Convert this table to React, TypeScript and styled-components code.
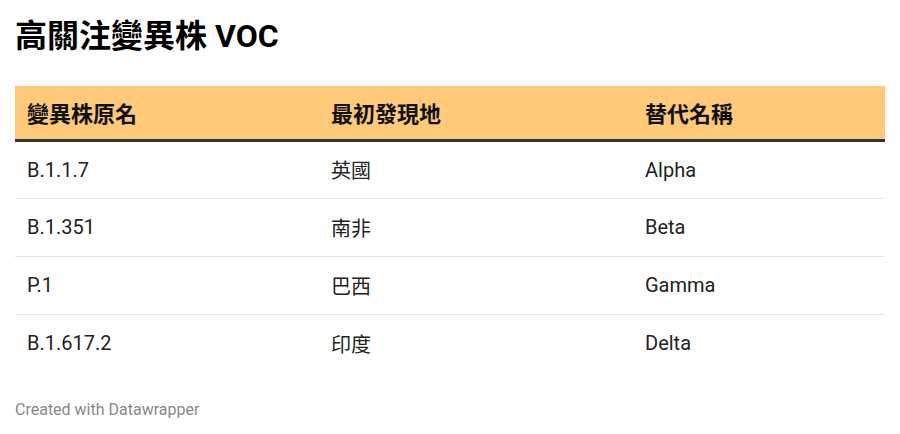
import React from 'react';
import styled, { createGlobalStyle } from 'styled-components';

const GlobalStyle = createGlobalStyle`
  html, body {
    margin: 0;
    padding: 0;
    background: #ffffff;
  }
  *, *::before, *::after {
    box-sizing: border-box;
  }
  body {
    font-family: Roboto, "Noto Sans CJK TC", sans-serif;
    color: #1d1d1d;
  }
`;

const StyledPage = styled.div`
  padding: 14px 15px 0 15px;
  width: 900px;
`;

const StyledTitle = styled.h1`
  margin: 0;
  font-size: 32px;
  line-height: 44px;
  font-weight: 700;
  color: #000;
`;

const StyledTable = styled.table`
  margin-top: 28px;
  width: 870px;
  border-collapse: collapse;
  table-layout: fixed;
`;

const StyledHeadCell = styled.th<{ $width: number }>`
  width: ${({ $width }) => $width}px;
  background: #fec978;
  text-align: left;
  font-size: 22px;
  font-weight: 700;
  color: #111;
  padding: 0 12px;
  height: 54px;
  border-bottom: 3px solid #333333;
`;

const StyledRow = styled.tr<{ $last?: boolean }>`
  border-bottom: ${({ $last }) => ($last ? 'none' : '1px solid #e6e6e6')};
`;

const StyledCell = styled.td`
  padding: 0 12px;
  height: 58px;
  font-size: 20px;
  color: #222;
`;

const StyledFooter = styled.p`
  margin: 28px 0 0;
  font-size: 16px;
  color: #888888;
`;

const columns = [
  { label: '變異株原名', width: 304 },
  { label: '最初發現地', width: 314 },
  { label: '替代名稱', width: 252 },
];

const rows = [
  ['B.1.1.7', '英國', 'Alpha'],
  ['B.1.351', '南非', 'Beta'],
  ['P.1', '巴西', 'Gamma'],
  ['B.1.617.2', '印度', 'Delta'],
];

export default function App() {
  return (
    <>
      <GlobalStyle />
      <StyledPage>
        <StyledTitle>高關注變異株 VOC</StyledTitle>
        <StyledTable>
          <thead>
            <tr>
              {columns.map((c) => (
                <StyledHeadCell key={c.label} $width={c.width}>
                  {c.label}
                </StyledHeadCell>
              ))}
            </tr>
          </thead>
          <tbody>
            {rows.map((r, i) => (
              <StyledRow key={r[0]} $last={i === rows.length - 1}>
                {r.map((v) => (
                  <StyledCell key={v}>{v}</StyledCell>
                ))}
              </StyledRow>
            ))}
          </tbody>
        </StyledTable>
        <StyledFooter>Created with Datawrapper</StyledFooter>
      </StyledPage>
    </>
  );
}
